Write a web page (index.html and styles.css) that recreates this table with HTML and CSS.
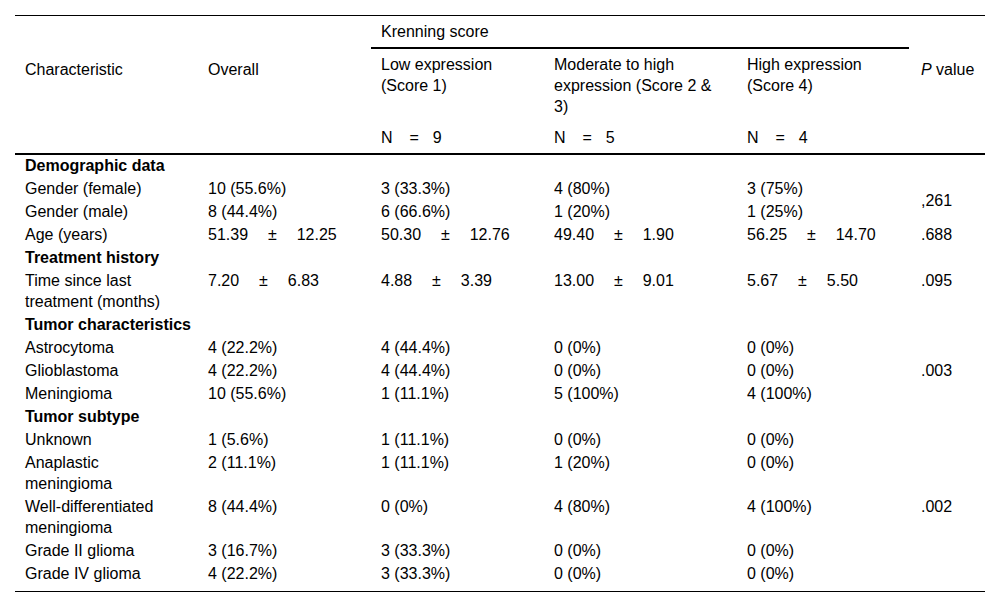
FILE: index.html
```html
<!DOCTYPE html>
<html lang="en">
<head>
<meta charset="utf-8">
<title>Krenning score table</title>
<link rel="stylesheet" href="styles.css">
</head>
<body>
<table class="data">
  <colgroup>
    <col class="c1"><col class="c2"><col class="c3"><col class="c4"><col class="c5"><col class="c6">
  </colgroup>
  <thead>
    <tr>
      <th rowspan="2" class="mid">Characteristic</th>
      <th rowspan="2" class="mid">Overall</th>
      <th colspan="3" class="group"><div class="group-label">Krenning score</div></th>
      <th rowspan="2" class="mid pcol"><i>P</i> value</th>
    </tr>
    <tr>
      <th>Low expression (Score 1)</th>
      <th>Moderate to high expression (Score 2 &amp; 3)</th>
      <th class="c5cell">High expression (Score 4)</th>
    </tr>
    <tr class="n-row">
      <th></th>
      <th></th>
      <th>N <span class="eq">=</span> 9</th>
      <th>N <span class="eq">=</span> 5</th>
      <th>N <span class="eq">=</span> 4</th>
      <th></th>
    </tr>
  </thead>
  <tbody>
    <tr class="section"><td colspan="6">Demographic data</td></tr>
    <tr><td>Gender (female)</td><td>10 (55.6%)</td><td>3 (33.3%)</td><td>4 (80%)</td><td>3 (75%)</td><td rowspan="2" class="mid pcol">,261</td></tr>
    <tr><td>Gender (male)</td><td>8 (44.4%)</td><td>6 (66.6%)</td><td>1 (20%)</td><td>1 (25%)</td></tr>
    <tr><td>Age (years)</td><td>51.39 <span class="pm">±</span> 12.25</td><td>50.30 <span class="pm">±</span> 12.76</td><td>49.40 <span class="pm">±</span> 1.90</td><td>56.25 <span class="pm">±</span> 14.70</td><td class="pcol">.688</td></tr>
    <tr class="section"><td colspan="6">Treatment history</td></tr>
    <tr><td>Time since last treatment (months)</td><td>7.20 <span class="pm">±</span> 6.83</td><td>4.88 <span class="pm">±</span> 3.39</td><td>13.00 <span class="pm">±</span> 9.01</td><td>5.67 <span class="pm">±</span> 5.50</td><td class="pcol">.095</td></tr>
    <tr class="section"><td colspan="6">Tumor characteristics</td></tr>
    <tr><td>Astrocytoma</td><td>4 (22.2%)</td><td>4 (44.4%)</td><td>0 (0%)</td><td>0 (0%)</td><td rowspan="3" class="mid pcol">.003</td></tr>
    <tr><td>Glioblastoma</td><td>4 (22.2%)</td><td>4 (44.4%)</td><td>0 (0%)</td><td>0 (0%)</td></tr>
    <tr><td>Meningioma</td><td>10 (55.6%)</td><td>1 (11.1%)</td><td>5 (100%)</td><td>4 (100%)</td></tr>
    <tr class="section"><td colspan="6">Tumor subtype</td></tr>
    <tr><td>Unknown</td><td>1 (5.6%)</td><td>1 (11.1%)</td><td>0 (0%)</td><td>0 (0%)</td><td rowspan="5" class="mid pcol last">.002</td></tr>
    <tr><td>Anaplastic meningioma</td><td>2 (11.1%)</td><td>1 (11.1%)</td><td>1 (20%)</td><td>0 (0%)</td></tr>
    <tr><td>Well-differentiated meningioma</td><td>8 (44.4%)</td><td>0 (0%)</td><td>4 (80%)</td><td>4 (100%)</td></tr>
    <tr><td>Grade II glioma</td><td>3 (16.7%)</td><td>3 (33.3%)</td><td>0 (0%)</td><td>0 (0%)</td></tr>
    <tr class="last-row"><td>Grade IV glioma</td><td>4 (22.2%)</td><td>3 (33.3%)</td><td>0 (0%)</td><td>0 (0%)</td></tr>
  </tbody>
</table>
</body>
</html>
```

FILE: styles.css
```css
html, body {
  margin: 0;
  padding: 0;
  background: #fff;
}

body {
  font-family: "Liberation Sans", Arial, Helvetica, sans-serif;
  font-size: 16px;
  line-height: 21px;
  color: #000;
}

.data {
  margin: 15px 0 0 15px;
  width: 970px;
  table-layout: fixed;
  border-collapse: separate;
  border-spacing: 0;
  border-top: 1px solid #000;
  border-bottom: 1px solid #000;
}

.c1 { width: 183px; }
.c2 { width: 173px; }
.c3 { width: 173px; }
.c4 { width: 193px; }
.c5 { width: 174px; }
.c6 { width: 74px; }

.data th,
.data td {
  text-align: left;
  vertical-align: top;
  font-weight: normal;
  padding: 0 16px 2px 10px;
}

.data thead th {
  padding-top: 5px;
  padding-bottom: 5px;
}

.data .pcol {
  padding-right: 0;
  white-space: nowrap;
}

.data th.mid,
.data td.mid {
  vertical-align: middle;
}

.data th.group {
  padding: 5px 2px 0 0;
}

.group-label {
  padding: 0 0 5px 10px;
  border-bottom: 2px solid #000;
}

.n-row th {
  border-bottom: 2px solid #000;
}

.eq {
  margin: 0 9.5px 0 12.5px;
}

.pm {
  margin: 0 15.5px;
}

.section td {
  font-weight: bold;
}

.last-row td,
.data td.last {
  padding-bottom: 7px;
}
```
